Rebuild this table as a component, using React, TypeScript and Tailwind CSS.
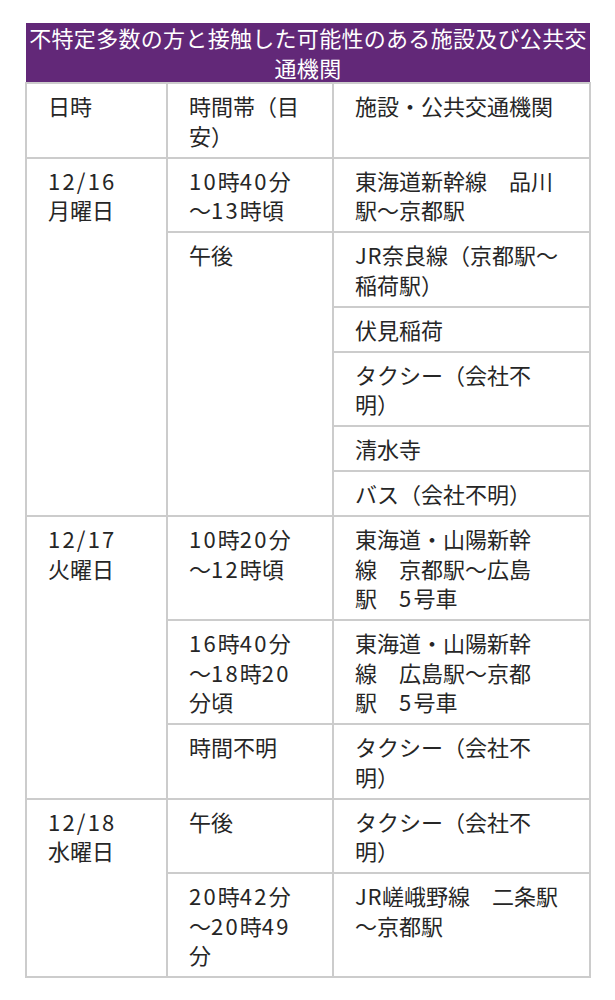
import React from "react";

type Row = {
  date?: string[];
  dateSpan?: number;
  time?: string[];
  timeSpan?: number;
  place: string[];
};

// line breaks follow the original layout
const rows: Row[] = [
  { date: ["12/16", "月曜日"], dateSpan: 6, time: ["10時40分", "～13時頃"], place: ["東海道新幹線　品川", "駅～京都駅"] },
  { time: ["午後"], timeSpan: 5, place: ["JR奈良線（京都駅～", "稲荷駅）"] },
  { place: ["伏見稲荷"] },
  { place: ["タクシー（会社不", "明）"] },
  { place: ["清水寺"] },
  { place: ["バス（会社不明）"] },
  { date: ["12/17", "火曜日"], dateSpan: 3, time: ["10時20分", "～12時頃"], place: ["東海道・山陽新幹", "線　京都駅～広島", "駅　5号車"] },
  { time: ["16時40分", "～18時20", "分頃"], place: ["東海道・山陽新幹", "線　広島駅～京都", "駅　5号車"] },
  { time: ["時間不明"], place: ["タクシー（会社不", "明）"] },
  { date: ["12/18", "水曜日"], dateSpan: 2, time: ["午後"], place: ["タクシー（会社不", "明）"] },
  { time: ["20時42分", "～20時49", "分"], place: ["JR嵯峨野線　二条駅", "～京都駅"] }
];

const cell =
  "border-2 border-[#cccccc] px-[21px] pt-[7px] pb-[6.5px] align-top whitespace-nowrap";

function Text({ value }: { value: string }) {
  const parts = value.split(/([0-9/]+|[A-Za-z]+)/);
  return (
    <>
      {parts.map((part, i) => {
        if (/^[0-9/]+$/.test(part)) {
          return (
            <span key={i} className="tracking-[0.1em]">
              {part}
            </span>
          );
        }
        if (/^[A-Za-z]+$/.test(part)) {
          return (
            <span key={i} className="tracking-[0.03em]">
              {part}
            </span>
          );
        }
        return <React.Fragment key={i}>{part}</React.Fragment>;
      })}
    </>
  );
}

function Lines({ lines }: { lines: string[] }) {
  return (
    <>
      {lines.map((line, i) => (
        <React.Fragment key={i}>
          {i > 0 && <br />}
          <Text value={line} />
        </React.Fragment>
      ))}
    </>
  );
}

export default function App() {
  return (
    <div
      className="min-h-[1000px] bg-white pt-[23px] pl-[25px] text-[#262626] [text-spacing-trim:space-all]"
      style={{ fontFamily: '"Noto Sans CJK JP", "Noto Sans", sans-serif' }}
    >
      <table className="w-[564px] table-fixed border-collapse text-[22px] leading-[29.5px]">
        <colgroup>
          <col className="w-[141px]" />
          <col className="w-[166px]" />
          <col className="w-[257px]" />
        </colgroup>
        <thead>
          <tr>
            <th
              colSpan={3}
              className="bg-[#622878] p-0 text-center text-[22px] leading-[29.5px] font-normal tracking-[0.3px] whitespace-nowrap text-white"
            >
              不特定多数の方と接触した可能性のある施設及び公共交
              <br />
              通機関
            </th>
          </tr>
        </thead>
        <tbody>
          <tr>
            <td className={cell}>日時</td>
            <td className={cell}>
              <Lines lines={["時間帯（目", "安）"]} />
            </td>
            <td className={cell}>施設・公共交通機関</td>
          </tr>
          {rows.map((row, i) => (
            <tr key={i}>
              {row.date ? (
                <td rowSpan={row.dateSpan} className={cell}>
                  <Lines lines={row.date} />
                </td>
              ) : null}
              {row.time ? (
                <td rowSpan={row.timeSpan ?? 1} className={cell}>
                  <Lines lines={row.time} />
                </td>
              ) : null}
              <td className={cell}>
                <Lines lines={row.place} />
              </td>
            </tr>
          ))}
        </tbody>
      </table>
    </div>
  );
}
